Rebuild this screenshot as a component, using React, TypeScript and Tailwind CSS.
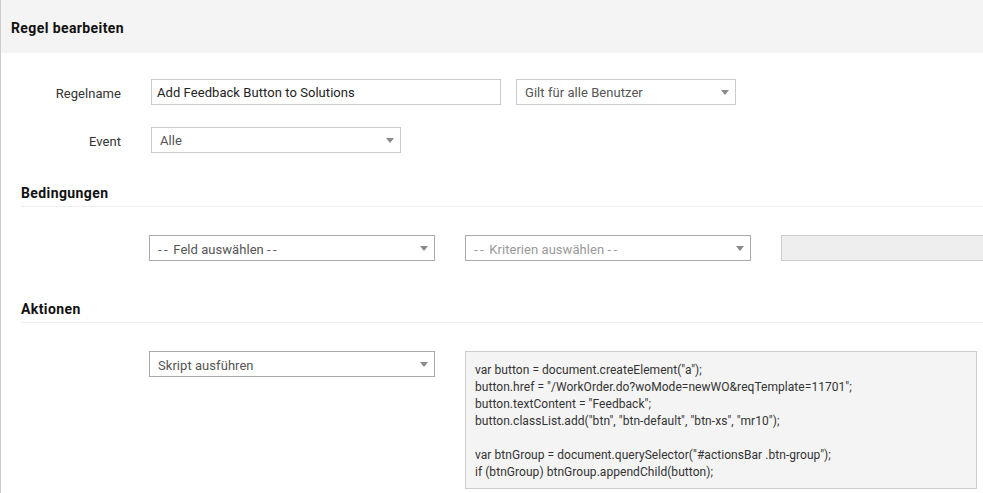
import React from "react";

function Caret({ color = "#8a8a8a" }: { color?: string }) {
  return (
    <svg width="8" height="5" viewBox="0 0 8 5" className="shrink-0">
      <path d="M0 0h8L4 5z" fill={color} />
    </svg>
  );
}

function SelectBox({
  label,
  className,
  muted,
  low,
}: {
  label: React.ReactNode;
  className: string;
  muted?: boolean;
  low?: boolean;
}) {
  return (
    <div
      className={
        "flex h-[26px] shrink-0 items-center justify-between border bg-white pl-2 pr-[6px] text-[13px] tracking-[0.05px] [font-variant-ligatures:none] " +
        className
      }
    >
      <span className={(low ? "pt-1 " : "pt-[2px] ") + (muted ? "text-[#999999]" : "text-[#555555]")}>{label}</span>
      <Caret />
    </div>
  );
}

function Dashes() {
  return <span className="tracking-[2.4px]">--</span>;
}

function SectionTitle({ title }: { title: string }) {
  return (
    <div className="ml-5 border-b border-[#eeeeee] pb-[3px]">
      <h2 className="text-[14px] leading-[20px] font-bold tracking-[0.4px] text-[#111111]">{title}</h2>
    </div>
  );
}

const script = `var button = document.createElement("a");
button.href = "/WorkOrder.do?woMode=newWO&reqTemplate=11701";
button.textContent = "Feedback";
button.classList.add("btn", "btn-default", "btn-xs", "mr10");

var btnGroup = document.querySelector("#actionsBar .btn-group");
if (btnGroup) btnGroup.appendChild(button);`;

export default function App() {
  return (
    <div className="h-[493px] w-[983px] overflow-hidden border-l border-[#cccccc] bg-white font-['Roboto',sans-serif]">
      <div className="flex h-[53px] items-center bg-[#f4f4f4] pl-[10px] pt-[3px]">
        <h1 className="text-[14px] font-bold tracking-[0.4px] text-[#111111]">Regel bearbeiten</h1>
      </div>

      <div className="mt-[26px] flex items-center">
        <label className="w-[120px] pt-1 text-right text-[13px] tracking-[0.05px] text-[#333333]">Regelname</label>
        <input
          readOnly
          value="Add Feedback Button to Solutions"
          className="ml-[30px] h-[26px] w-[350px] border border-[#cccccc] bg-white px-[5px] text-[13px] tracking-[0.06px] text-[#222222] outline-none"
        />
        <SelectBox
          label="Gilt für alle Benutzer"
          className="ml-[15px] w-[220px] border-[#cccccc]"
        />
      </div>

      <div className="mt-[22px] flex items-center">
        <label className="w-[120px] pt-1 text-right text-[13px] tracking-[0.05px] text-[#333333]">Event</label>
        <SelectBox label="Alle" className="ml-[30px] w-[250px] border-[#cccccc]" />
      </div>

      <div className="mt-[30px]">
        <SectionTitle title="Bedingungen" />
      </div>

      <div className="mt-[28px] flex pl-[148px]">
        <SelectBox
          low
          label={<><Dashes /> Feld auswählen <Dashes /></>}
          className="w-[286px] border-[#aaaaaa]"
        />
        <SelectBox
          low
          label={<><Dashes /> Kriterien auswählen <Dashes /></>}
          muted
          className="ml-[30px] w-[286px] border-[#aaaaaa]"
        />
        <div className="ml-[30px] h-[26px] w-[220px] shrink-0 border border-[#cccccc] bg-[#eeeeee]" />
      </div>

      <div className="mt-[38px]">
        <SectionTitle title="Aktionen" />
      </div>

      <div className="mt-[28px] flex items-start pl-[148px]">
        <SelectBox low label="Skript ausführen" className="w-[286px] border-[#aaaaaa]" />
        <pre className="ml-[30px] h-[138px] w-[512px] shrink-0 border border-[#cccccc] bg-[#f4f4f4] px-[9px] pt-[10px] font-['Roboto',sans-serif] text-[12px] leading-[17px] tracking-[0.05px] text-[#333333]">
          {script}
        </pre>
      </div>
    </div>
  );
}
